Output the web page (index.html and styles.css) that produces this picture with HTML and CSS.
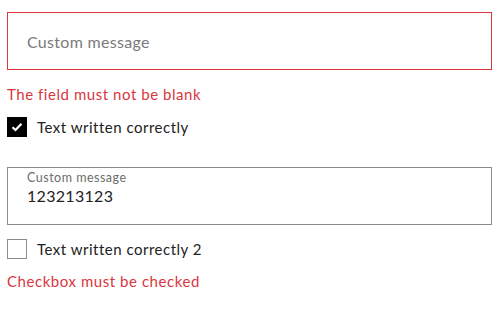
FILE: index.html
```html
<html>
<head>
<link rel="stylesheet" href="styles.css">
</head>
<body>
<div class="form">
  <div class="field fieldError">
    <span class="placeholder">Custom message</span>
  </div>
  <div class="errorText first">The field must not be blank</div>

  <div class="check">
    <span class="box checked">
      <svg width="12" height="10" viewBox="0 0 12 10"><path d="M1.5 5.2 L4.5 8 L10.5 1.8" fill="none" stroke="#fff" stroke-width="2.2"/></svg>
    </span>
    <span class="checkLabel">Text written correctly</span>
  </div>

  <div class="field filled">
    <span class="smallLabel">Custom message</span>
    <span class="value">123213123</span>
  </div>

  <div class="check second">
    <span class="box"></span>
    <span class="checkLabel">Text written correctly 2</span>
  </div>
  <div class="errorText">Checkbox must be checked</div>
</div>
</body>
</html>
```

FILE: styles.css
```css
body {
    margin: 0;
    background-color: #fff;
    font-family: Lato, "Noto Sans", sans-serif;
}

.form {
    padding: 12px 10px 0 7px;
}

.field {
    box-sizing: border-box;
    width: 485px;
    height: 58px;
    border: 1px solid #8c8c8c;
    padding: 0 19px;
    display: flex;
    flex-direction: column;
    justify-content: center;
}

.fieldError {
    border-color: #d9363e;
}

.placeholder {
    font-size: 16px;
    color: #7a7a7a;
    letter-spacing: 0.3px;
}

.filled {
    justify-content: flex-start;
    padding-top: 2px;
}

.smallLabel {
    font-size: 12.5px;
    color: #6b6b6b;
    line-height: 16px;
    letter-spacing: 0.5px;
}

.value {
    font-size: 16px;
    color: #222;
    line-height: 20px;
    letter-spacing: 0.3px;
}

.errorText {
    color: #d9363e;
    font-size: 15px;
    line-height: 20px;
    margin-top: 12px;
    letter-spacing: 0.55px;
}

.errorText.first {
    margin-top: 14px;
}

.check {
    display: flex;
    align-items: center;
    margin-top: 13px;
    margin-bottom: 30px;
}

.check.second {
    margin-top: 14px;
    margin-bottom: 0;
}

.box {
    box-sizing: border-box;
    width: 20px;
    height: 20px;
    border: 1px solid #8c8c8c;
    display: flex;
    align-items: center;
    justify-content: center;
}

.box.checked {
    background-color: #000;
    border-color: #000;
}

.checkLabel {
    margin-left: 10px;
    font-size: 15px;
    color: #222;
    letter-spacing: 0.5px;
}
```
